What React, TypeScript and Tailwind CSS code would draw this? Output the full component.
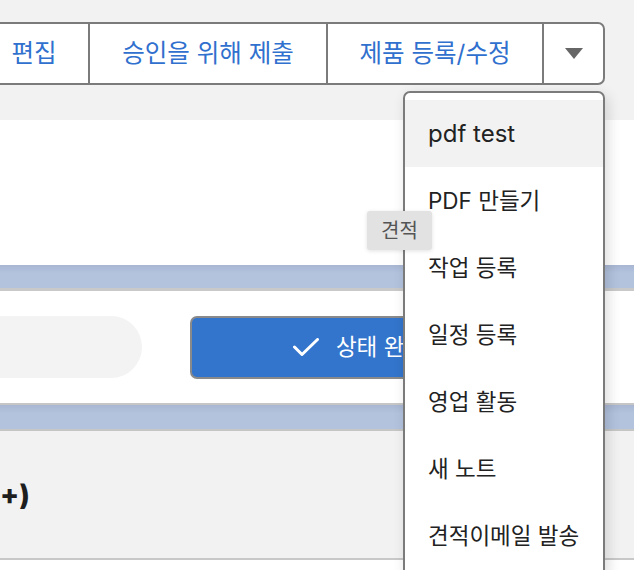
import React from 'react';

const ButtonGroup: React.FC = () => {
  return (
    <div className="ml-[-22px] flex h-[63px] w-[627px] overflow-hidden rounded-[7px] border-2 border-[#7b7b7b] bg-white text-[24.5px] text-[#3070ce]">
      <button className="flex w-[108px] items-center justify-center">편집</button>
      <button className="flex w-[238px] items-center justify-center border-l-2 border-[#7b7b7b]">
        승인을 위해 제출
      </button>
      <button className="flex w-[216px] items-center justify-center border-l-2 border-[#7b7b7b]">
        제품 등록/수정
      </button>
      <button className="flex w-[61px] items-center justify-center border-l-2 border-[#7b7b7b]">
        <svg width="18" height="11" viewBox="0 0 18 11">
          <polygon points="0,0 18,0 9,11" fill="#666666" />
        </svg>
      </button>
    </div>
  );
};

const menuItems: React.ReactNode[] = [
  <span className="text-[24px]">pdf test</span>,
  <span>PDF 만들기</span>,
  '작업 등록',
  '일정 등록',
  '영업 활동',
  '새 노트',
  '견적이메일 발송',
];

const ActionMenu: React.FC = () => {
  return (
    <div className="absolute left-[403px] top-[91px] w-[202px] rounded-[7px] border-2 border-[#7b7b7b] bg-white pt-[7px] pb-[10px] shadow-[3px_4px_14px_rgba(0,0,0,0.14)]">
      {menuItems.map((item, i) => (
        <div
          key={i}
          className={
            i === 0
              ? 'flex h-[67px] items-center bg-[#f2f2f2] pl-[23px] text-[22.5px] text-[#222222]'
              : 'flex h-[67px] items-center pl-[23px] text-[22.5px] text-[#222222]'
          }
        >
          {item}
        </div>
      ))}
    </div>
  );
};

const App: React.FC = () => {
  return (
    <div className="relative h-[570px] w-[634px] overflow-hidden bg-white font-['Inter','Noto_Sans_CJK_KR',sans-serif]">
      <div className="h-[120px] bg-[#f2f2f2] pt-[22px]">
        <ButtonGroup />
      </div>

      <div className="h-[145px] bg-white" />

      <div className="h-[26px] border-b-[3px] border-[#c9c9c9] bg-[linear-gradient(#a8b6d2,#b3c3de_35%)]" />

      <div className="flex h-[112px] items-center bg-white">
        <div className="ml-[-58px] h-[62px] w-[200px] rounded-full bg-[#f3f3f3]" />
        <button className="ml-[48px] flex h-[63px] w-[338px] items-center justify-center gap-[17px] rounded-[7px] border-2 border-[#8a8a8a] bg-[#3375cc] text-[22.5px] text-white">
          <svg width="26" height="18" viewBox="0 0 26 18" fill="none">
            <polyline
              points="1.5,9 9,16.5 24.5,1.5"
              stroke="white"
              strokeWidth="3"
              strokeLinecap="round"
              strokeLinejoin="round"
            />
          </svg>
          상태 완료
        </button>
      </div>

      <div className="h-[28px] border-y-2 border-[#c6c6c6] bg-[linear-gradient(#a8b6d2,#b3c3de_35%)]" />

      <div className="flex h-[127px] items-center bg-[#f2f2f2]">
        <h2 className="text-[28px] font-extrabold text-[#1e1e1e]">+)</h2>
      </div>

      <div className="h-[12px] border-t-2 border-[#c8c8c8] bg-white" />

      <ActionMenu />

      <div className="absolute left-[367px] top-[211px] flex h-[39px] w-[65px] items-center justify-center rounded-[3px] bg-[#e2e2e2] text-[20px] text-[#555555] shadow-[0_1px_4px_rgba(0,0,0,0.12)]">
        견적
      </div>
    </div>
  );
};

export default App;
